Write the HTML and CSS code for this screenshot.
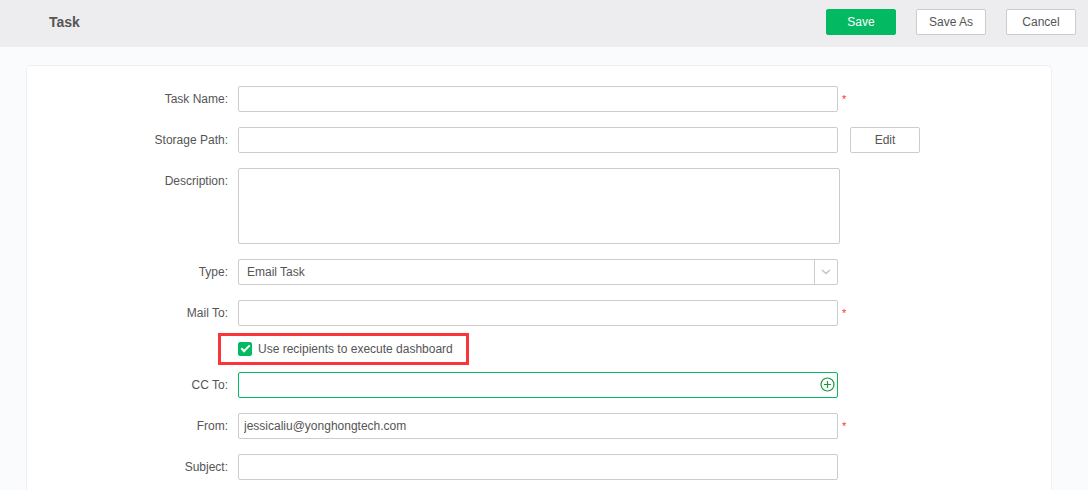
FILE: index.html
```html
<!DOCTYPE html>
<html lang="en">
<head>
<meta charset="utf-8">
<title>Task</title>
<meta name="viewport" content="width=device-width, initial-scale=1">
<link rel="stylesheet" href="styles.css">
</head>
<body class="page">
<header class="topbar">
  <h1 class="topbar-title">Task</h1>
  <div class="topbar-actions">
    <button class="btn btn-primary" type="submit" form="task-form">Save</button>
    <button class="btn" type="button">Save As</button>
    <button class="btn" type="button">Cancel</button>
  </div>
</header>
<main class="card">
  <form class="form" id="task-form">
    <div class="row">
      <label class="label" for="name">Task Name:</label>
      <input class="field" id="name" type="text">
      <span class="required">*</span>
    </div>
    <div class="row">
      <label class="label" for="path">Storage Path:</label>
      <input class="field" id="path" type="text">
      <button class="btn btn-edit" type="button">Edit</button>
    </div>
    <div class="row">
      <label class="label" for="description">Description:</label>
      <textarea class="field field-area" id="description"></textarea>
    </div>
    <div class="row">
      <label class="label" for="type">Type:</label>
      <div class="control">
        <select class="field field-select" id="type"><option>Email Task</option></select>
        <span class="select-arrow">
          <svg width="10" height="6" viewBox="0 0 10 6" fill="none" stroke="#c4c4c4" stroke-width="1.6"><path d="M1 1l4 3.5L9 1"/></svg>
        </span>
      </div>
    </div>
    <div class="row">
      <label class="label" for="mail-to">Mail To:</label>
      <input class="field" id="mail-to" type="text">
      <span class="required">*</span>
    </div>
    <div class="row row-check">
      <label class="highlight">
        <input class="checkbox" type="checkbox" checked>
        <span>Use recipients to execute dashboard</span>
      </label>
    </div>
    <div class="row">
      <label class="label" for="cc-to">CC To:</label>
      <div class="control">
        <input class="field field-active" id="cc-to" type="text">
        <button class="add" type="button" aria-label="Add recipient">
          <svg width="15" height="15" viewBox="0 0 15 15" fill="none" stroke="#159a3c"><circle cx="7.5" cy="7.5" r="6.5" stroke-width="1.2"/><path d="M7.5 4v7M4 7.5h7" stroke-width="1.2"/></svg>
        </button>
      </div>
    </div>
    <div class="row">
      <label class="label" for="from">From:</label>
      <input class="field" id="from" type="text" value="jessicaliu@yonghongtech.com">
      <span class="required">*</span>
    </div>
    <div class="row">
      <label class="label" for="subject">Subject:</label>
      <input class="field" id="subject" type="text">
    </div>
  </form>
</main>
</body>
</html>
```
FILE: styles.css
```css
*,
*::before,
*::after {
  box-sizing: border-box;
}

.page {
  display: flex;
  flex-direction: column;
  min-height: 100vh;
  margin: 0;
  background: #fafbfd;
  color: #555;
  font: 12px/16px "Liberation Sans", Arial, sans-serif;
}

.topbar {
  display: flex;
  align-items: center;
  justify-content: space-between;
  padding: 9px 12px 12px 49px;
  background: #ededef;
}

.topbar-title {
  margin: 0;
  font-size: 14px;
  line-height: 20px;
  color: #555;
}

.topbar-actions {
  display: flex;
  gap: 20px;
}

.btn {
  width: 70px;
  height: 26px;
  padding: 0;
  border: 1px solid #ccc;
  border-radius: 2px;
  background: #fff;
  color: #555;
  font: inherit;
}

.btn-primary {
  border-color: #03b962;
  background: #03b962;
  color: #fff;
}

.btn-edit {
  margin-left: 2px;
}

.card {
  flex: 1;
  margin: 18px 36px 0 26px;
  padding: 20px 20px 10px 0;
  border: 1px solid #efeff1;
  border-bottom: 0;
  border-radius: 5px 5px 0 0;
  background: #fff;
}

.form {
  display: flex;
  flex-direction: column;
  gap: 15px;
}

.row {
  display: grid;
  grid-template-columns: 201px minmax(0, 600px) auto;
  column-gap: 10px;
  justify-content: start;
  align-items: start;
}

.label {
  padding: 5px 0;
  text-align: right;
}

.control {
  position: relative;
}

.field {
  display: block;
  width: 100%;
  height: 26px;
  margin: 0;
  padding: 0 5px;
  border: 1px solid #ccc;
  border-radius: 2px;
  outline: 0;
  background: #fff;
  color: #555;
  font: inherit;
}

.field-area {
  width: calc(100% + 2px);
  height: 76px;
  resize: none;
}

.field-select {
  padding: 0 32px 0 8px;
  appearance: none;
}

.field-active {
  padding-right: 24px;
  border-color: #03b962;
}

.select-arrow {
  position: absolute;
  top: 1px;
  right: 1px;
  bottom: 1px;
  display: flex;
  align-items: center;
  justify-content: center;
  width: 23px;
  border-left: 1px solid #ccc;
  pointer-events: none;
}

.add {
  position: absolute;
  top: 5px;
  right: 3px;
  display: flex;
  padding: 0;
  border: 0;
  background: none;
}

.required {
  margin-left: -6px;
  padding: 5px 0;
  color: #f33;
  font-size: 11px;
}

.row-check {
  margin: -8px 0;
}

.highlight {
  grid-column: 2;
  justify-self: start;
  display: flex;
  align-items: center;
  gap: 6px;
  height: 32px;
  margin-left: -20px;
  padding: 0 13px 0 17px;
  border: 3px solid #fa3439;
}

.checkbox {
  width: 14px;
  height: 14px;
  margin: 0;
  border-radius: 2px;
  appearance: none;
  border: 1px solid #ccc;
}

.checkbox:checked {
  border-color: #03b962;
  background: #03b962;
}

.checkbox:checked::before {
  content: "";
  display: block;
  width: 9px;
  height: 5px;
  margin: 2px 0 0 2px;
  border: solid #fff;
  border-width: 0 0 2px 2px;
  transform: rotate(-45deg);
}
```
